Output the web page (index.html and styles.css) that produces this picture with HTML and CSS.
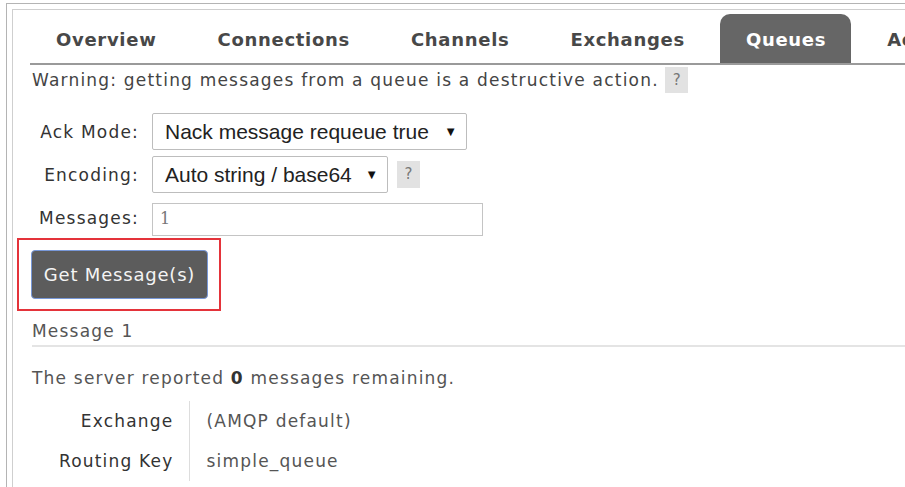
FILE: index.html
```html
<!DOCTYPE html>
<html>
<head>
<meta charset="utf-8">
<link rel="stylesheet" href="styles.css">
</head>
<body>
<div class="outer">
  <div class="inner">
    <ul class="tabs">
      <li class="tab">Overview</li>
      <li class="tab">Connections</li>
      <li class="tab">Channels</li>
      <li class="tab">Exchanges</li>
      <li class="tab active">Queues</li>
      <li class="tab">Admin</li>
    </ul>
    <p class="warning">Warning: getting messages from a queue is a destructive action. <span class="help">?</span></p>
    <div class="form">
      <label class="lbl">Ack Mode:</label>
      <div class="ctl"><div class="select sel-ack"><span>Nack message requeue true</span><span class="arrow">▼</span></div></div>
      <label class="lbl">Encoding:</label>
      <div class="ctl"><div class="select sel-enc"><span>Auto string / base64</span><span class="arrow">▼</span></div><span class="help help-enc">?</span></div>
      <label class="lbl">Messages:</label>
      <div class="ctl"><div class="input">1</div></div>
    </div>
    <div class="highlight">
      <button class="btn">Get Message(s)</button>
    </div>
    <h3 class="msg-title">Message 1</h3>
    <p class="remaining">The server reported <b>0</b> messages remaining.</p>
    <table class="props">
      <tr><th>Exchange</th><td>(AMQP default)</td></tr>
      <tr><th>Routing Key</th><td>simple_queue</td></tr>
    </table>
  </div>
</div>
</body>
</html>
```

FILE: styles.css
```css
* { box-sizing: border-box; }
html, body { margin: 0; padding: 0; background: #fff; overflow: hidden; }
body {
  font-family: "DejaVu Sans", Verdana, sans-serif;
  color: #484848;
  width: 905px;
  height: 487px;
}
.outer {
  margin: 3px 0 0 6px;
  border-top: 1px solid #b4b4b4;
  border-left: 1px solid #b4b4b4;
  padding: 5px 0 0 5px;
  height: 484px;
  overflow: hidden;
}
.inner {
  border-top: 1px solid #cfcfcf;
  border-left: 1px solid #cfcfcf;
  padding: 4px 0 0 17px;
  height: 100%;
}
.tabs {
  list-style: none;
  margin: 0;
  padding: 0;
  display: flex;
  border-bottom: 2px solid #9a9a9a;
  white-space: nowrap;
  overflow: hidden;
}
.tab {
  font-weight: bold;
  font-size: 18px;
  letter-spacing: 0.7px;
  color: #484848;
  height: 49px;
  line-height: 52px;
  padding: 0 25px 0 26px;
  margin-right: 10px;
  border-radius: 10px 10px 0 0;
  flex-shrink: 0;
}
.tab.active { background: #666; color: #fff; }
.warning {
  margin: 2px 0 0 2px;
  font-size: 17px;
  letter-spacing: 1.2px;
  line-height: 26px;
  color: #444;
  white-space: nowrap;
}
.help {
  display: inline-block;
  background: #e2e2e2;
  color: #777;
  font-size: 15px;
  letter-spacing: 0;
  width: 23px;
  height: 26px;
  line-height: 26px;
  text-align: center;
  vertical-align: top;
}
.form {
  display: grid;
  grid-template-columns: 108px auto;
  column-gap: 14px;
  row-gap: 6px;
  margin-top: 20px;
  align-items: center;
}
.lbl {
  text-align: right;
  font-size: 17px;
  letter-spacing: 1.2px;
  color: #333;
  margin-right: -1px;
}
.ctl { display: flex; align-items: center; }
.select {
  display: flex;
  justify-content: space-between;
  align-items: center;
  font-family: "Liberation Sans", Arial, sans-serif;
  font-size: 21px;
  color: #222;
  height: 37px;
  border: 1px solid #bdbdbd;
  border-radius: 2px;
  padding: 0 9px 0 12px;
  background: #fff;
  white-space: nowrap;
}
.sel-ack { width: 315px; }
.sel-enc { width: 236px; }
.arrow { font-size: 13px; color: #111; }
.help-enc { margin-left: 9px; height: 27px; line-height: 27px; }
.form .ctl:last-child { margin-top: 4px; }
.input {
  width: 331px;
  height: 33px;
  border: 1px solid #c4c4c4;
  font-family: "DejaVu Serif", serif;
  font-size: 16px;
  color: #777;
  padding: 3px 7px;
  line-height: 24px;
}
.highlight {
  margin: 2px 0 0 -13px;
  width: 204px;
  height: 73px;
  border: 2px solid #e4333a;
  padding: 10px 0 0 12px;
}
.btn {
  width: 177px;
  height: 49px;
  background: #5c5c5c;
  border: 1px solid #7898d8;
  border-radius: 4px;
  color: #f4f4f4;
  font-family: "DejaVu Sans", Verdana, sans-serif;
  font-size: 18px;
  letter-spacing: 0.8px;
  padding: 0;
}
.msg-title {
  font-weight: normal;
  font-size: 17px;
  letter-spacing: 1.2px;
  color: #555;
  margin: 9px 0 0 2px;
  padding-bottom: 3px;
  border-bottom: 2px solid #e4e4e4;
  line-height: 22px;
}
.remaining {
  font-size: 17px;
  letter-spacing: 1.2px;
  color: #555;
  margin: 20px 0 0 2px;
  line-height: 22px;
}
.remaining b { color: #333; }
.props {
  border-collapse: collapse;
  margin-top: 12px;
  font-size: 17px;
  letter-spacing: 1.2px;
}
.props th {
  font-weight: normal;
  color: #333;
  text-align: right;
  width: 159px;
  padding: 0 15px 0 0;
  height: 40px;
  border-right: 1px solid #ddd;
}
.props td {
  color: #555;
  padding: 0 0 0 17px;
}
```
